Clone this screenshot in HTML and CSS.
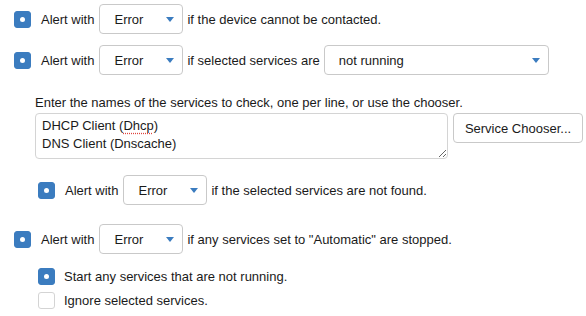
FILE: index.html
```html
<!DOCTYPE html>
<html lang="en">
<head>
    <meta charset="UTF-8">
    <title>Service Monitor Options</title>
    <link rel="stylesheet" href="styles.css">
</head>
<body>
    <div class="options">
        <div class="row">
            <span class="check checked"></span>
            <span class="label">Alert with</span>
            <div class="dropdown">
                <span>Error</span>
                <svg class="arrow" width="8" height="5" viewBox="0 0 8 5"><path d="M0 0H8L4 5Z"/></svg>
            </div>
            <span>if the device cannot be contacted.</span>
        </div>

        <div class="row row-second">
            <span class="check checked"></span>
            <span class="label">Alert with</span>
            <div class="dropdown">
                <span>Error</span>
                <svg class="arrow" width="8" height="5" viewBox="0 0 8 5"><path d="M0 0H8L4 5Z"/></svg>
            </div>
            <span>if selected services are</span>
            <div class="dropdown dropdown-wide">
                <span>not running</span>
                <svg class="arrow" width="8" height="5" viewBox="0 0 8 5"><path d="M0 0H8L4 5Z"/></svg>
            </div>
        </div>

        <div class="services">
            <div class="services-label">Enter the names of the services to check, one per line, or use the chooser.</div>
            <div class="services-input">
                <div class="textarea">DHCP Client (<span class="misspelled">Dhcp</span>)<br>DNS Client (Dnscache)</div>
                <button class="chooser">Service Chooser...</button>
            </div>
        </div>

        <div class="row row-nested">
            <span class="check checked"></span>
            <span class="label">Alert with</span>
            <div class="dropdown">
                <span>Error</span>
                <svg class="arrow" width="8" height="5" viewBox="0 0 8 5"><path d="M0 0H8L4 5Z"/></svg>
            </div>
            <span>if the selected services are not found.</span>
        </div>

        <div class="row row-auto">
            <span class="check checked"></span>
            <span class="label">Alert with</span>
            <div class="dropdown">
                <span>Error</span>
                <svg class="arrow" width="8" height="5" viewBox="0 0 8 5"><path d="M0 0H8L4 5Z"/></svg>
            </div>
            <span>if any services set to "Automatic" are stopped.</span>
        </div>

        <div class="sub-options">
            <div class="sub-row">
                <span class="check checked"></span>
                <span>Start any services that are not running.</span>
            </div>
            <div class="sub-row">
                <span class="check"></span>
                <span>Ignore selected services.</span>
            </div>
        </div>
    </div>
</body>
</html>
```

FILE: styles.css
```css
body {
    margin: 0;
    font-family: "Liberation Sans", Arial, sans-serif;
    font-size: 13px;
    color: #1a1a1a;
    background-color: white;
}

.options {
    padding: 4px 0 0 14px;
}

.row {
    display: flex;
    align-items: center;
    height: 30px;
}

.row-second {
    margin-top: 11px;
}

.row-nested {
    margin: 16px 0 0 24px;
}

.row-auto {
    margin-top: 19px;
}

.check {
    box-sizing: border-box;
    width: 17px;
    height: 17px;
    border-radius: 3px;
    border: 1px solid #d4d4d4;
    background-color: white;
    display: flex;
    align-items: center;
    justify-content: center;
    flex-shrink: 0;
}

.check.checked {
    background-color: #3b7cbf;
    border-color: #3b7cbf;
}

.check.checked::after {
    content: "";
    width: 5px;
    height: 5px;
    border-radius: 50%;
    background-color: white;
}

.label {
    margin-left: 10px;
}

.dropdown {
    box-sizing: border-box;
    width: 84px;
    height: 30px;
    margin: 0 4px 0 5px;
    padding: 0 8px 0 14px;
    border: 1px solid #c9c9c9;
    border-radius: 4px;
    display: flex;
    align-items: center;
    justify-content: space-between;
}

.dropdown-wide {
    width: 225px;
    margin-left: 4px;
}

.arrow {
    fill: #3b7cbf;
}

/* Service list */
.services {
    margin: 20px 0 0 21px;
}

.services-label {
    line-height: 16px;
    margin-bottom: 2px;
}

.services-input {
    display: flex;
    align-items: flex-start;
    gap: 5px;
}

.textarea {
    box-sizing: border-box;
    width: 413px;
    height: 46px;
    padding: 3px 6px;
    border: 1px solid #d4d4d4;
    border-radius: 4px;
    font-family: "Liberation Sans", Arial, sans-serif;
    line-height: 18px;
    overflow: auto;
    resize: both;
}

.misspelled {
    text-decoration: underline dotted #e0443e;
    text-underline-offset: 3px;
}

.chooser {
    box-sizing: border-box;
    width: 130px;
    height: 30px;
    background-color: white;
    border: 1px solid #c9c9c9;
    border-radius: 4px;
    font-family: inherit;
    font-size: 13px;
    color: #1a1a1a;
}

/* Start / ignore */
.sub-options {
    margin: 10px 0 0 24px;
}

.sub-row {
    display: flex;
    align-items: center;
    gap: 9px;
    height: 24px;
}
```
